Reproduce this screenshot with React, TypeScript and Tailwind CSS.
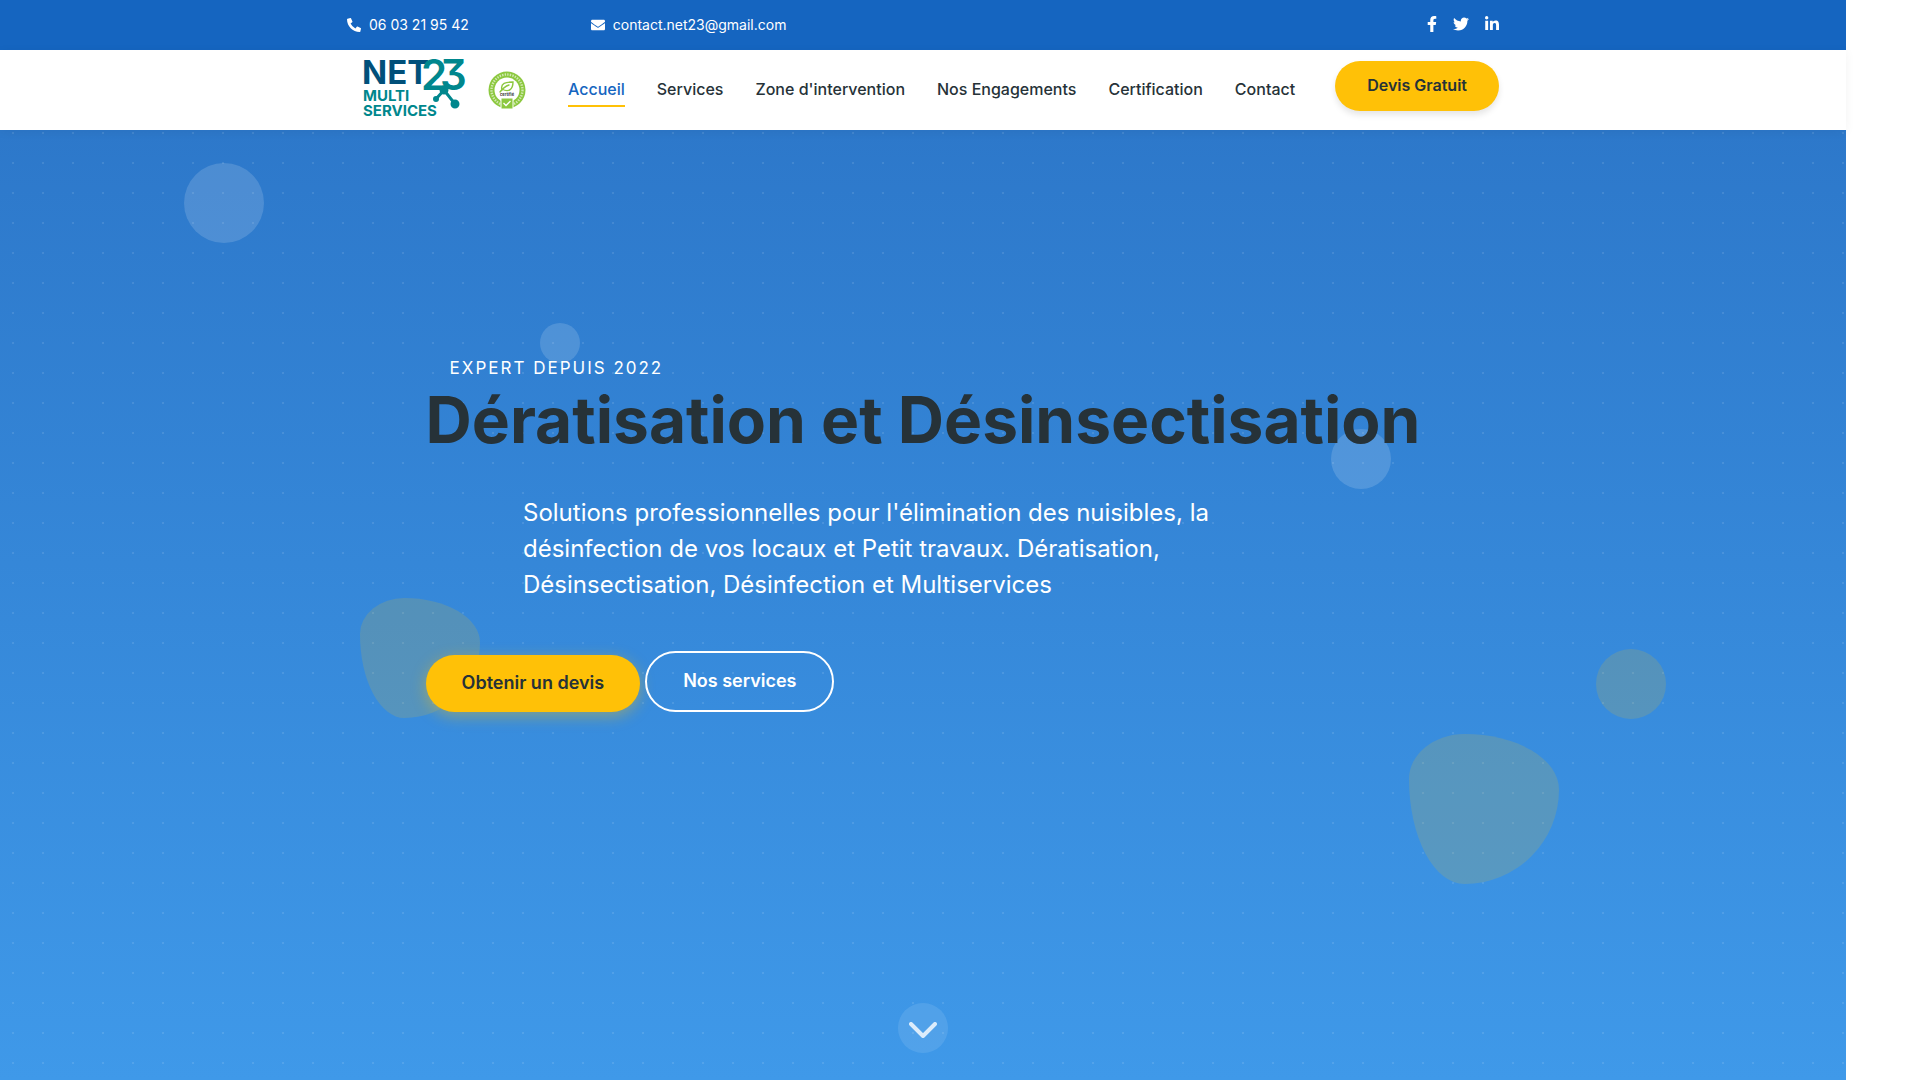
import { FaEnvelope, FaFacebookF, FaLinkedinIn, FaPhoneAlt, FaTwitter } from 'react-icons/fa';

const NAV = ['Accueil', 'Services', "Zone d'intervention", 'Nos Engagements', 'Certification', 'Contact'];

function Logo() {
  return (
    <svg viewBox="0 0 106 66" className="h-[66px] w-[106px] overflow-visible" role="img" aria-label="NET23 Multi Services">
      <g fontFamily="Inter, sans-serif" fill="#00878d" fontWeight="700">
        <text x="1" y="29" fontSize="33" fill="#01507a">NET</text>
        <g fontSize="42" fontWeight="600" style={{ fontFeatureSettings: '"cv09"' }}>
          <text x="60" y="35">2</text>
          <text x="79" y="35">3</text>
        </g>
        <text x="2" y="46" fontSize="15">MULTI</text>
        <text x="2" y="61" fontSize="15">SERVICES</text>
      </g>
      <g stroke="#00878d" strokeWidth="3" fill="#00878d">
        <path d="M75 44 L83 35 L94 49" fill="none" />
        <circle cx="83" cy="35" r="3" />
        <circle cx="75" cy="44" r="1.5" />
        <circle cx="94" cy="49" r="3" />
      </g>
    </svg>
  );
}

function Badge() {
  return (
    <svg viewBox="0 0 38 38" className="h-[38px] w-[38px]" role="img" aria-label="Certification">
      <circle cx="19" cy="19" r="18.5" fill="#8cc83f" />
      <circle cx="19" cy="19" r="15.5" fill="none" stroke="#fff" strokeOpacity="0.6" strokeWidth="2.4" strokeDasharray="1.4 1.2" />
      <circle cx="19" cy="19" r="12.5" fill="#fff" />
      <g fill="none" stroke="#8cc83f" strokeWidth="1.4" strokeLinecap="round">
        <path d="M14 19 C12 12 18 11 25 11 C25 18 21 22 14 18" />
        <path d="M12 21 C15 17 18 15 21 14" />
      </g>
      <text x="19" y="25" textAnchor="middle" fontSize="4" fontWeight="700" fontFamily="Inter, sans-serif" fill="#333">certifié</text>
      <rect x="13" y="27" width="12" height="11" fill="#8cc83f" stroke="#fff" strokeWidth="1" />
      <path d="M15.5 32 L18 34.5 L22.5 30" fill="none" stroke="#fff" strokeWidth="1.3" />
    </svg>
  );
}

export default function App() {
  return (
    <div className="min-h-screen bg-white font-['Inter',sans-serif] text-[#263238]">
      <div className="mr-[74px] flex min-h-screen flex-col">
        <div className="bg-[#1565c0] text-white">
          <div className="mx-auto flex h-[50px] max-w-[1152px] items-center text-sm">
            <a href="tel:0603219542" className="mr-[122px] flex items-center gap-2"><FaPhoneAlt />06 03 21 95 42</a>
            <a href="mailto:contact.net23@gmail.com" className="flex items-center gap-2"><FaEnvelope />contact.net23@gmail.com</a>
            <div className="mb-0.5 ml-auto flex items-center gap-4 text-base">
              <a href="#facebook" aria-label="Facebook"><FaFacebookF className="w-[10px]" /></a>
              <a href="#twitter" aria-label="Twitter"><FaTwitter /></a>
              <a href="#linkedin" aria-label="LinkedIn"><FaLinkedinIn className="w-[14px]" /></a>
            </div>
          </div>
        </div>
        <header className="relative z-10 bg-white shadow-[0_2px_10px_rgba(0,0,0,0.05)]">
          <div className="mx-auto flex h-20 max-w-[1152px] items-center">
            <a href="#accueil" className="ml-[14px] flex items-center gap-[21px]">
              <span className="-mt-1"><Logo /></span>
              <Badge />
            </a>
            <nav className="ml-[42px] flex gap-8 font-medium">
              {NAV.map((label, i) => (
                <a key={label} href="#" className={i === 0 ? 'border-b-2 border-[#ffc107] py-1 text-[#1565c0]' : 'py-1'}>{label}</a>
              ))}
            </nav>
            <button className="mb-2 ml-auto h-[50px] rounded-full bg-[#ffc107] px-8 pb-0.5 font-semibold shadow-[0_4px_6px_rgba(0,0,0,0.1)]">Devis Gratuit</button>
          </div>
        </header>
        <main className="relative flex-1 overflow-hidden bg-linear-to-b from-[#2d78ca] to-[#3f99e9]">
          <div className="absolute inset-0 bg-[radial-gradient(circle,rgba(255,255,255,0.1)_1px,transparent_1px)] bg-[length:30px_30px] bg-position-[-2px_-12px]" />
          <div className="absolute top-[33px] left-[184px] size-20 rounded-full bg-white/15" />
          <div className="absolute top-[193px] left-[540px] size-10 rounded-full bg-white/15" />
          <div className="absolute top-[299px] left-[1331px] size-[60px] rounded-full bg-white/15" />
          <div className="absolute top-[519px] left-[1596px] size-[70px] rounded-full bg-[#ffc107]/15" />
          <div className="absolute top-[468px] left-[360px] size-[120px] rounded-[37%_63%_63%_37%/30%_37%_63%_70%] bg-[#ffc107]/15" />
          <div className="absolute top-[604px] left-[1409px] size-[150px] rounded-[37%_63%_63%_37%/30%_37%_63%_70%] bg-[#ffc107]/15" />
          <div className="relative mx-auto w-fit pt-[224px]">
            <p className="px-6 text-[17px] leading-7 tracking-[2px] text-white">EXPERT DEPUIS 2022</p>
            <h1 className="text-[64px] leading-[76px] font-bold">Dératisation et Désinsectisation</h1>
            <p className="mx-auto mt-[37px] max-w-[800px] text-2xl leading-9 text-white">
              Solutions professionnelles pour l'élimination des nuisibles, la désinfection de vos locaux et Petit travaux. Dératisation, Désinsectisation, Désinfection et Multiservices
            </p>
            <div className="mt-12 flex items-end gap-[5px] text-lg font-semibold">
              <button className="h-[57px] rounded-full bg-[#ffc107] px-9 pb-0.5 shadow-[0_4px_15px_rgba(255,193,7,0.4)]">Obtenir un devis</button>
              <button className="h-[61px] rounded-full border-2 border-white px-9 pb-0.5 text-white">Nos services</button>
            </div>
          </div>
          <a href="#services" aria-label="Défiler" className="absolute bottom-[27px] left-1/2 flex size-[50px] -translate-x-1/2 items-center justify-center rounded-full bg-white/10 pt-1">
            <svg viewBox="0 0 28 16" className="h-4 w-7" fill="none" stroke="#fff" strokeOpacity="0.8" strokeWidth="4" strokeLinecap="round" strokeLinejoin="round"><path d="M2 2 L14 14 L26 2" /></svg>
          </a>
        </main>
      </div>
    </div>
  );
}
